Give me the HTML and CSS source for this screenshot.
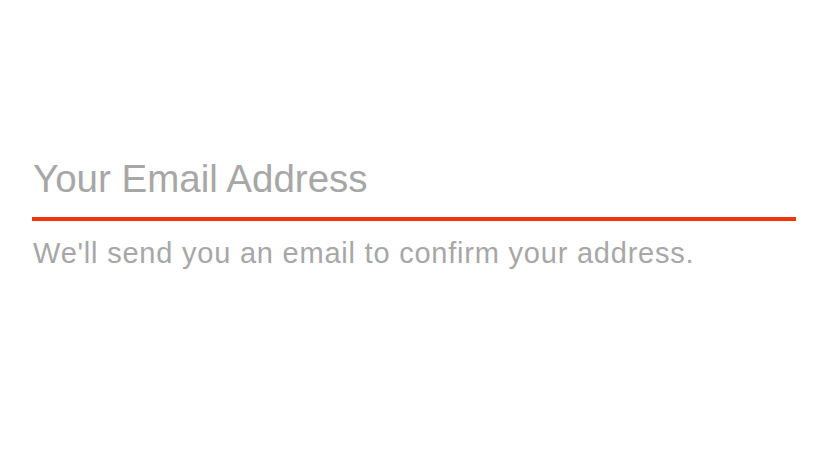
FILE: index.html
```html
<!DOCTYPE html>
<html lang="en">
<head>
    <meta charset="UTF-8">
    <meta name="viewport" content="width=device-width, initial-scale=1.0">
    <title>Email</title>
    <link rel="stylesheet" href="styles.css">
</head>
<body>
    <div class="form">
        <input class="email-input" type="email" placeholder="Your Email Address">
        <p class="hint">We'll send you an email to confirm your address.</p>
    </div>
</body>
</html>
```

FILE: styles.css
```css
body {
    font-family: "Liberation Sans", Arial, sans-serif;
    background: #fff;
    margin: 0;
    padding: 0;
}
.form {
    padding: 155px 32px 0 32px;
}
.email-input {
    display: block;
    width: 100%;
    box-sizing: border-box;
    border: none;
    border-bottom: 4px solid #f2360c;
    outline: none;
    font-family: inherit;
    font-size: 38.5px;
    color: #333;
    padding: 2px 0 16px 1px;
    background: transparent;
}
.email-input::placeholder {
    color: #a7a7a7;
}
.hint {
    margin: 16px 0 0 1px;
    font-size: 29px;
    letter-spacing: 0.78px;
    color: #a7a7a7;
}
```
